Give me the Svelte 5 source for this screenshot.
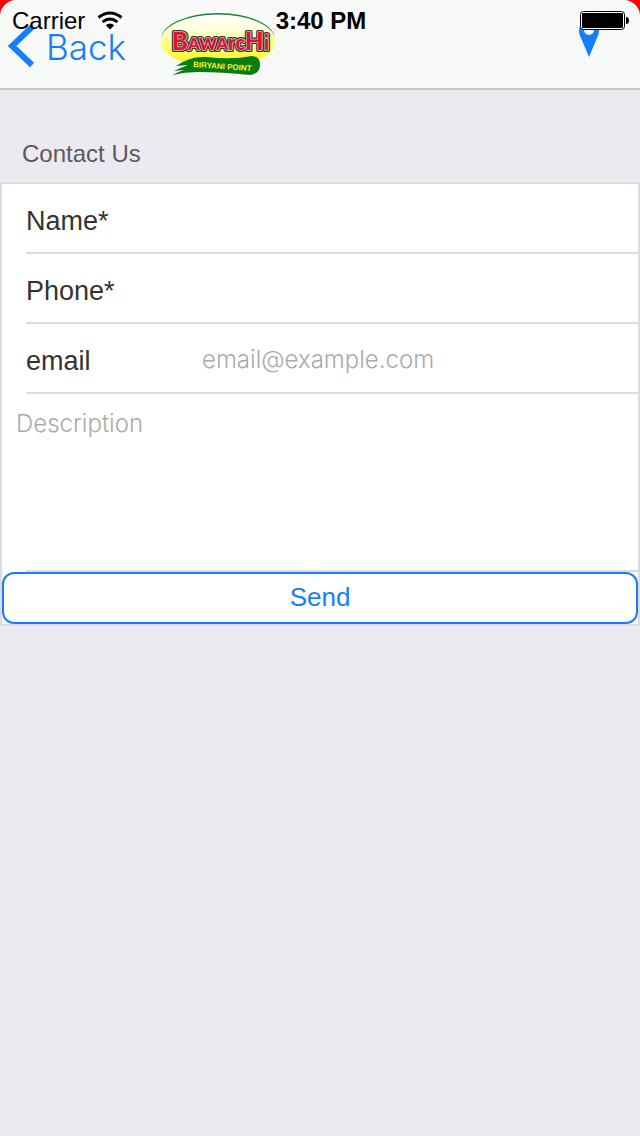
<script>
  let name = $state('');
  let phone = $state('');
  let email = $state('');
  let description = $state('');
</script>

{#snippet wordmark()}B<tspan font-size="17">AWA</tspan><tspan font-size="20">rc</tspan>H<tspan font-size="21">i</tspan>{/snippet}

<div class="screen">
  <header>
    <div class="status">
      <div class="carrier">
        <span>Carrier</span>
        <svg width="26" height="20" viewBox="0 0 26 20" aria-hidden="true">
          <path d="M1.500 6.500 Q13 -2.500 24.500 6.500" fill="none" stroke="#000" stroke-width="3" />
          <path d="M5.500 11 Q13 5 20.500 11" fill="none" stroke="#000" stroke-width="2.800" />
          <path d="M8.800 14.200 Q13 11 17.200 14.200 L13 18.500 Z" fill="#000" />
        </svg>
      </div>
      <time>3:40 PM</time>
      <svg class="battery" width="50" height="20" viewBox="0 0 50 20" aria-hidden="true">
        <rect x="0.500" y="0.500" width="44" height="18" rx="3" fill="#fff" stroke="#000" />
        <rect x="2" y="2" width="41" height="15" rx="1" fill="#000" />
        <path d="M46 6 Q49 6 49 9.500 Q49 13 46 13 Z" fill="#000" />
      </svg>
    </div>
    <nav>
      <button type="button" class="back">
        <svg width="26" height="42" viewBox="0 0 26 42" aria-hidden="true">
          <path d="M24 2 L4 21 L24 40" fill="none" stroke="#157efb" stroke-width="6" />
        </svg>
        <span>Back</span>
      </button>
      <svg class="logo" width="120" height="68" viewBox="158 10 120 68" role="img" aria-label="Bawarchi Biryani Point">
        <defs>
          <linearGradient id="glow" x1="0" y1="0" x2="0" y2="1">
            <stop offset="0" stop-color="#fff" />
            <stop offset="0.300" stop-color="#ffffd8" />
            <stop offset="0.700" stop-color="#ffff50" />
            <stop offset="1" stop-color="#f8f400" />
          </linearGradient>
        </defs>
        <ellipse cx="218" cy="39.500" rx="57" ry="26.500" fill="#168038" />
        <ellipse cx="218" cy="41" rx="57.500" ry="26.500" fill="url(#glow)" />
        <path d="M176 66 Q190 56 206 57 Q232 60 252 56 Q261 57 260 66 Q259 74 250 75 Q222 72 198 72 Q185 72 172 75 Q178 72 184 70 L174 71 Q180 68 188 65 Z" fill="#0a7d10" />
        <g font-family="Lato, sans-serif" font-weight="900" font-size="24" fill="#e60f2d" stroke-linejoin="round" paint-order="stroke">
          <text x="172" y="50" stroke="#333" stroke-width="4">{@render wordmark()}</text>
          <text x="172" y="50" stroke="#ccc" stroke-width="1.500">{@render wordmark()}</text>
        </g>
        <text x="193" y="67" transform="rotate(4 193 67)" font-family="Liberation Sans, sans-serif" font-size="8" font-weight="700" fill="#f6f23a">BIRYANI POINT</text>
      </svg>
      <button type="button" class="place" aria-label="Location">
        <svg width="22" height="38" viewBox="0 0 22 38" aria-hidden="true">
          <path fill="#157efb" fill-rule="evenodd" d="M11 38 L3 19 C1.500 16 1 14 1 11 A10 10 0 0 1 21 11 C21 14 20.500 16 19 19 Z M11 6 A5 5 0 1 0 11 16 A5 5 0 1 0 11 6 Z" />
        </svg>
      </button>
    </nav>
  </header>

  <main>
    <h1>Contact Us</h1>
    <form onsubmit={(event) => event.preventDefault()}>
      <div class="row">
        <label for="name">Name*</label>
        <input id="name" type="text" bind:value={name} />
      </div>
      <div class="row">
        <label for="phone">Phone*</label>
        <input id="phone" type="tel" bind:value={phone} />
      </div>
      <div class="row">
        <label for="email">email</label>
        <input id="email" type="email" placeholder="email@example.com" bind:value={email} />
      </div>
      <div class="note">
        <textarea aria-label="Description" placeholder="Description" bind:value={description}></textarea>
      </div>
      <button type="submit" class="send">Send</button>
    </form>
  </main>
</div>

<style>
  :global(body) {
    margin: 0;
    background: #ece9f0;
  }
  .screen {
    min-height: 100vh;
    background: #ece9f0;
    font-family: "Liberation Sans", Arial, sans-serif;
    color: #333;
  }
  button,
  input,
  textarea {
    margin: 0;
    border: 0;
    padding: 0;
    background: none;
    font-family: inherit;
    outline: 0;
  }
  svg {
    display: block;
    flex: none;
  }
  header {
    position: relative;
    background: linear-gradient(#f00, #f00) top / 100% 20px no-repeat;
  }
  .status {
    position: absolute;
    inset: 0 0 auto;
    display: grid;
    grid-template-columns: 1fr auto 1fr;
    align-items: center;
    height: 42px;
    padding: 0 10px 0 12px;
    color: #000;
    font-size: 24px;
    pointer-events: none;
  }
  .carrier {
    display: flex;
    align-items: center;
    gap: 12px;
  }
  time {
    font-weight: 700;
  }
  .battery {
    justify-self: end;
  }
  nav {
    display: flex;
    align-items: center;
    box-sizing: border-box;
    height: 90px;
    border-bottom: 2px solid #c8c7cc;
    border-radius: 16px 16px 0 0;
    padding: 0 40px 0 8px;
    background: #f7f9f8;
  }
  .back {
    display: flex;
    align-items: center;
    gap: 12px;
    width: 150px;
    padding-top: 4px;
    color: #157efb;
    font-family: Inter, sans-serif;
    font-size: 35px;
    font-weight: 300;
  }
  .back span {
    padding-top: 2px;
  }
  .place {
    margin-left: auto;
    padding-bottom: 12px;
  }
  h1 {
    margin: 0;
    padding: 50px 22px 14px;
    color: #5a5a5c;
    font-size: 24px;
    font-weight: 400;
    line-height: 28px;
  }
  form {
    border: 2px solid #dcdbe0;
    background: #fff;
  }
  .row {
    display: flex;
    align-items: center;
    height: 68px;
    margin-left: 24px;
    border-bottom: 2px solid #dcdbe0;
  }
  label {
    width: 176px;
    padding-top: 6px;
    font-size: 27px;
  }
  input {
    flex: 1;
    min-width: 0;
    padding-top: 4px;
  }
  input,
  textarea {
    color: #333;
    font-family: Inter, sans-serif;
    font-size: 24px;
    font-weight: 300;
    line-height: 32px;
  }
  ::placeholder {
    color: #aaa;
    opacity: 1;
  }
  .note {
    background: linear-gradient(#dcdbe0, #dcdbe0) 24px bottom / 100% 2px no-repeat;
    padding-bottom: 2px;
  }
  textarea {
    display: block;
    box-sizing: border-box;
    width: 100%;
    height: 176px;
    padding: 14px;
    resize: none;
  }
  .send {
    display: block;
    box-sizing: border-box;
    width: 100%;
    height: 52px;
    border: 2px solid #157efb;
    border-radius: 12px;
    padding-bottom: 2px;
    color: #157efb;
    font-size: 26px;
  }
</style>
